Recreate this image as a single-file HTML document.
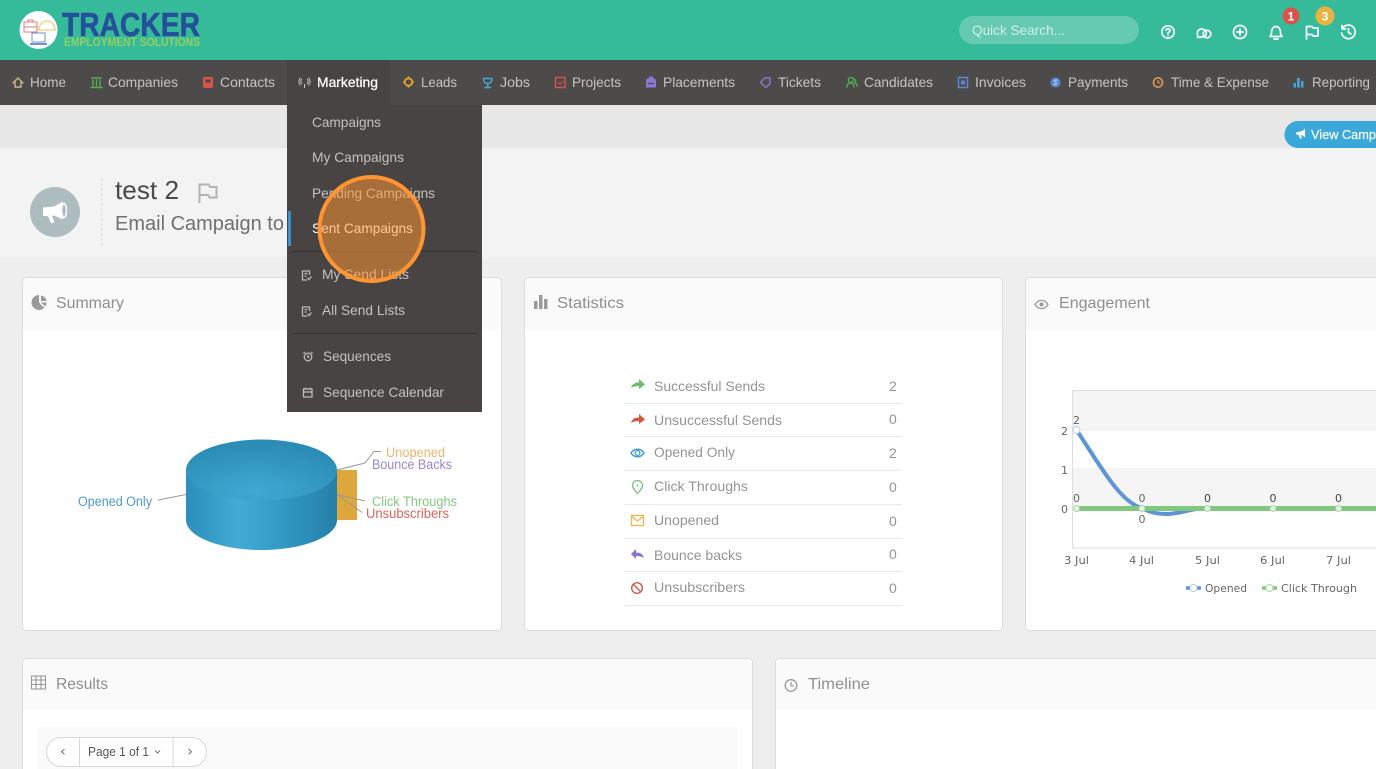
<!DOCTYPE html>
<html lang="en"><head><meta charset="utf-8"><title>test 2</title>
<style>
html,body{margin:0;padding:0;width:1376px;height:769px;overflow:hidden;background:#eee}
svg{display:block;position:absolute;left:0;top:0}
text{font-family:"Liberation Sans","DejaVu Sans",sans-serif}
.n{font-size:14px;fill:#c6c4c3}
.d{font-size:14px;fill:#c4c2c1}
.t{font-size:16px;fill:#8f8f8f}
.s{font-size:14px;fill:#949494}
.v{font-size:14px;fill:#959595}
.c{font-family:"DejaVu Sans",sans-serif;font-size:11px;fill:#666}
.i{fill:none;stroke-width:1.4;stroke-linecap:round;stroke-linejoin:round}
.h{fill:none;stroke:#fff;stroke-width:1.7;stroke-linecap:round;stroke-linejoin:round}
</style></head><body>
<svg width="1376" height="769" viewBox="0 0 1376 769" xmlns="http://www.w3.org/2000/svg">
<defs>
<linearGradient id="side" x1="0" x2="1" y1="0" y2="0"><stop offset="0" stop-color="#2b8fba"/><stop offset=".35" stop-color="#41abd6"/><stop offset=".7" stop-color="#2f95c0"/><stop offset="1" stop-color="#267fa6"/></linearGradient>
<radialGradient id="top" cx=".45" cy=".85" r=".75"><stop offset="0" stop-color="#3fa9d3"/><stop offset="1" stop-color="#2b8db6"/></radialGradient>
</defs>
<!-- backgrounds -->
<rect width="1376" height="769" fill="#eeeeee"/>
<rect width="1376" height="60" fill="#36bb9a"/>
<rect y="60" width="1376" height="45" fill="#4d4b4a"/>
<rect y="105" width="1376" height="43" fill="#e7e7e7"/>
<rect y="148" width="1376" height="110" fill="#f3f3f3"/>

<!-- logo -->
<circle cx="38.500" cy="30" r="19" fill="#fff"/>
<rect x="24" y="22" width="13" height="10" fill="none" stroke="#e27a7a" stroke-width="1"/>
<path d="M24 27H37M28 22v-2h5v2" fill="none" stroke="#e27a7a" stroke-width="1"/>
<path d="M39 30c0-12 16-12 16 0zM38 30h18" fill="none" stroke="#eec95c" stroke-width="1.100"/>
<rect x="32" y="33" width="13" height="9" fill="none" stroke="#6f93d6" stroke-width="1"/>
<path d="M30 44h17" stroke="#6f93d6" stroke-width="2"/>
<text x="62" y="36" font-size="33" font-weight="700" fill="#25509a" stroke="#25509a" stroke-width=".6" textLength="138" lengthAdjust="spacingAndGlyphs">TRACKER</text>
<text x="64" y="46" font-size="11.500" font-weight="700" fill="#93cf62" textLength="136" lengthAdjust="spacingAndGlyphs">EMPLOYMENT SOLUTIONS</text>

<!-- search -->
<rect x="959" y="16" width="180" height="28" rx="14" fill="#66c9b1"/>
<text x="972" y="35" font-size="14" fill="#d2efe7" textLength="93" lengthAdjust="spacingAndGlyphs">Quick Search...</text>

<!-- top icons -->
<circle class="h" cx="1168" cy="32" r="6.200"/><path class="h" stroke-width="1.300" d="M1166 30.200c.4-2 4-1.800 4 .2 0 1.500-2 1.500-2 2.900M1168 35.300v.2"/>
<path class="h" d="M1201 37c-2 .4-4 .6-3.500-.2 1-1.400-.2-1.500-.2-3.600 0-2.500 2-4.200 4.500-4.200s4.500 1.700 4.500 4.200-2 3.800-5.300 3.800z"/><circle class="h" cx="1207" cy="34" r="3.800"/>
<circle class="h" cx="1240" cy="32" r="6.500"/><path class="h" d="M1237 32h6M1240 29v6"/>
<path class="h" d="M1270 36.500c1.500-1 1.500-2.500 1.500-4.500 0-3 2-5.500 4.500-5.500s4.500 2.500 4.500 5.500c0 2 0 3.500 1.500 4.500zM1274 39h4"/>
<path class="h" d="M1306.500 39V26.500h5.500l1 1.500h5v8h-5l-1-1.500h-5.500"/>
<path class="h" d="M1342.500 28.500a6.800 6.800 0 1 1-.8 4.500M1342 25.500v3.500h3.500M1348.500 28.500v4l2.500 1.500"/>
<circle cx="1291" cy="16" r="8.500" fill="#d9534a"/><text x="1291" y="20.500" font-size="12" font-weight="700" fill="#fff" text-anchor="middle">1</text>
<circle cx="1325" cy="16" r="9.500" fill="#eab23e"/><text x="1325" y="20.500" font-size="12" font-weight="700" fill="#fff" text-anchor="middle">3</text>

<!-- nav -->
<rect x="287" y="60" width="103" height="45" fill="#474443"/>
<path class="i" stroke="#cbb98e" d="M13 83l5-5 5 5M15 82v5h6v-5"/>
<text class="n" x="30" y="87" textLength="36" lengthAdjust="spacingAndGlyphs">Home</text>
<path class="i" stroke="#58ad4e" d="M92 78h9M93 80v6M96.500 80v6M100 80v6M91 87.500h11"/>
<text class="n" x="108" y="87" textLength="70" lengthAdjust="spacingAndGlyphs">Companies</text>
<rect x="203" y="77" width="10" height="11" rx="1.500" fill="#d9534a"/><rect x="205.500" y="79.500" width="5" height="3" fill="#4d4b4a"/>
<text class="n" x="220" y="87" textLength="55" lengthAdjust="spacingAndGlyphs">Contacts</text>
<g fill="none" stroke="#c8c8c8" stroke-width="1"><path d="M304.500 84v4M302 79c-1.500 1.500-1.500 3.500 0 5M307 79c1.500 1.500 1.500 3.500 0 5M300.500 77.500c-2 2.500-2 5.500 0 8M308.500 77.500c2 2.500 2 5.500 0 8"/></g>
<text x="317" y="87" font-size="14" fill="#fff" stroke="#fff" stroke-width=".25" textLength="61" lengthAdjust="spacingAndGlyphs">Marketing</text>
<circle cx="408.500" cy="82" r="3.700" fill="none" stroke="#eaa42e" stroke-width="1.800"/><path d="M408.500 76.500v2M408.500 85.500v2M403 82h2M412 82h2" stroke="#eaa42e" stroke-width="1.500"/>
<text class="n" x="421" y="87" textLength="36" lengthAdjust="spacingAndGlyphs">Leads</text>
<path class="i" stroke="#4aa8d4" stroke-width="1.800" d="M483.500 78.500h8.500c0 3-1.500 5-4.250 5s-4.250-2-4.250-5zM487.750 84v3M485 87.500h5.500"/>
<text class="n" x="500" y="87" textLength="30" lengthAdjust="spacingAndGlyphs">Jobs</text>
<rect x="555.500" y="77.500" width="9.500" height="10" fill="none" stroke="#d9534a" stroke-width="1.400"/><path d="M558 82.500l2 1.800 3-3.500" fill="none" stroke="#d9534a" stroke-width="1.100"/>
<text class="n" x="572" y="87" textLength="49" lengthAdjust="spacingAndGlyphs">Projects</text>
<path d="M646 80.500c0-1 1-2 2-2h1v-2h4v2h1c1 0 2 1 2 2v7h-10z" fill="#8a78d6"/><path d="M648 83.500h6" stroke="#4d4b4a" stroke-width="1.200"/>
<text class="n" x="663" y="87" textLength="72" lengthAdjust="spacingAndGlyphs">Placements</text>
<path class="i" stroke="#8a78d6" d="M760.500 82.500l4-4.500h5.500v5.500l-4 4z"/>
<text class="n" x="778" y="87" textLength="43" lengthAdjust="spacingAndGlyphs">Tickets</text>
<path class="i" stroke="#4fae55" d="M847 87c0-3 1.500-4 3.500-4s3.500 1 3.500 4M852.500 78a2.500 2.500 0 1 1-4 2.500 2.500 2.500 0 0 1 4-2.500zM854 79a2.500 2.500 0 0 1 1 4c1 .5 2 1.500 2 3"/>
<text class="n" x="864" y="87" textLength="69" lengthAdjust="spacingAndGlyphs">Candidates</text>
<rect x="958.500" y="77.500" width="9" height="10" fill="none" stroke="#5b85d6" stroke-width="1.500"/><rect x="961" y="80.500" width="4" height="4" fill="#5b85d6"/>
<text class="n" x="975" y="87" textLength="51" lengthAdjust="spacingAndGlyphs">Invoices</text>
<circle cx="1055.500" cy="82.500" r="5" fill="#5b85d6"/><path d="M1053.500 84c1 1 3 .5 3-.8s-2-1-2-2.200 2-1.500 3-.5" fill="none" stroke="#cfdcf5" stroke-width=".9"/>
<text class="n" x="1068" y="87" textLength="60" lengthAdjust="spacingAndGlyphs">Payments</text>
<circle cx="1158" cy="82.500" r="4.600" fill="none" stroke="#e89a55" stroke-width="1.500"/><path d="M1158 80v2.700h2.500" fill="none" stroke="#e89a55" stroke-width="1.100"/>
<text class="n" x="1171" y="87" textLength="98" lengthAdjust="spacingAndGlyphs">Time &amp; Expense</text>
<path d="M1293.500 83h2.500v4.500h-2.500zM1297 78h2.800v9.500H1297zM1301 81h2.500v6.500H1301z" fill="#4aa0d0"/>
<text class="n" x="1312" y="87" textLength="58" lengthAdjust="spacingAndGlyphs">Reporting</text>

<!-- view campaign -->
<path d="M1298 121h78v27h-78a13.500 13.500 0 0 1 0-27z" fill="#3aa8d8"/>
<path d="M1296 132.500l6-1.500 3-2.500v9l-3-2.500h-1l1 3.500h-2l-1.500-3.800-2.500-.2z" fill="#fff"/>
<text x="1311" y="139" font-size="13" fill="#fff" stroke="#fff" stroke-width=".2" textLength="65" lengthAdjust="spacingAndGlyphs">View Camp</text>

<!-- title -->
<circle cx="55" cy="212" r="25" fill="#adbcbf"/>
<path d="M43 207.500l11-1 9-5v18l-9-4-2 .2 2.500 6.500-3.500 1-3-7-5-.5z" fill="#fff"/><ellipse cx="64" cy="210.500" rx="2.500" ry="7" fill="#adbcbf" stroke="#fff" stroke-width="1.500"/>
<path d="M101.500 178v70" stroke="#dcdcdc" stroke-dasharray="3 2"/>
<text x="115" y="199" font-size="26" fill="#4a4a4a" textLength="64" lengthAdjust="spacingAndGlyphs">test 2</text>
<path d="M199.500 203V184.500h9l1.500 2.500h6.500v10.500h-7l-1.500-2.500h-8.500" fill="none" stroke="#b3b3b3" stroke-width="2"/>
<text x="115" y="230" font-size="20.500" fill="#6f6f6f" textLength="169" lengthAdjust="spacingAndGlyphs">Email Campaign to</text>

<!-- cards -->
<g stroke="#dcdcdc" fill="#fff">
<rect x="22.500" y="277.500" width="479" height="353" rx="4"/>
<rect x="524.500" y="277.500" width="478" height="353" rx="4"/>
<rect x="1025.500" y="277.500" width="360" height="353" rx="4"/>
<rect x="22.500" y="658.500" width="730" height="130" rx="4"/>
<rect x="775.500" y="658.500" width="640" height="130" rx="4"/>
</g>
<g fill="#fafafa">
<path d="M23 330V282a4 4 0 0 1 4-4h470a4 4 0 0 1 4 4v48z"/>
<path d="M525 330V282a4 4 0 0 1 4-4h469a4 4 0 0 1 4 4v48z"/>
<path d="M1026 330V282a4 4 0 0 1 4-4h346v52z"/>
<path d="M23 711V663a4 4 0 0 1 4-4h721a4 4 0 0 1 4 4v48z"/>
<path d="M776 711V663a4 4 0 0 1 4-4h596v52z"/>
</g>
<path d="M39 295a7.500 7.500 0 1 0 7.500 7.500H39z" fill="#9a9a9a"/><path d="M41 295.500a7 7 0 0 1 5.500 5.500H41z" fill="#9a9a9a"/><path d="M40 303l6 5" stroke="#fafafa" stroke-width="1.500"/>
<text class="t" x="56" y="308" textLength="68" lengthAdjust="spacingAndGlyphs">Summary</text>
<path d="M534 301h3.500v8H534zM539 295h3.500v14H539zM544 299h3.500v10H544z" fill="#9a9a9a"/>
<text class="t" x="557" y="308" textLength="67" lengthAdjust="spacingAndGlyphs">Statistics</text>
<path d="M1035 304.500c3.500-5.500 9.500-5.500 13 0-3.500 5.500-9.500 5.500-13 0z" fill="none" stroke="#9a9a9a" stroke-width="1.300"/><circle cx="1041.500" cy="304.500" r="2" fill="#9a9a9a"/>
<text class="t" x="1059" y="308" textLength="91" lengthAdjust="spacingAndGlyphs">Engagement</text>
<g fill="none" stroke="#999" stroke-width="1.100"><rect x="31.500" y="676" width="14" height="13"/><path d="M31.500 680h14M31.500 684.500h14M36 676v13M41 676v13"/></g>
<text class="t" x="56" y="689" textLength="52" lengthAdjust="spacingAndGlyphs">Results</text>
<circle cx="791" cy="685.500" r="5.800" fill="none" stroke="#999" stroke-width="1.300"/><path d="M791 682v3.800h3" fill="none" stroke="#999" stroke-width="1.200"/>
<text class="t" x="808" y="689" textLength="62" lengthAdjust="spacingAndGlyphs">Timeline</text>

<!-- pie -->
<rect x="337" y="470" width="20" height="50" fill="#dda73b"/>
<path d="M186 470v50c0 16.500 34 30 75.500 30s75.500-13.500 75.500-30v-50z" fill="url(#side)"/>
<ellipse cx="261.500" cy="470" rx="75.500" ry="30.500" fill="url(#top)"/>
<g fill="none" stroke="#999" stroke-width="1">
<path d="M337 470l28-7 9-11.500h7"/>
<path d="M337 494.500l28 6.500"/>
<path d="M337 494.500l25 18"/>
<path d="M186 494.500l-28 5.500"/>
</g>
<g font-size="13.500">
<text x="386" y="457" fill="#f0b46c" textLength="59" lengthAdjust="spacingAndGlyphs">Unopened</text>
<text x="372" y="469" fill="#9a85cf" textLength="80" lengthAdjust="spacingAndGlyphs">Bounce Backs</text>
<text x="372" y="506" fill="#85c785" textLength="85" lengthAdjust="spacingAndGlyphs">Click Throughs</text>
<text x="366" y="518" fill="#d9655a" textLength="83" lengthAdjust="spacingAndGlyphs">Unsubscribers</text>
<text x="78" y="506" fill="#4b9cc4" textLength="74" lengthAdjust="spacingAndGlyphs">Opened Only</text>
</g>

<!-- statistics -->
<g stroke="#e9e9e9"><path d="M624 403.500h278M624 436.500h278M624 470.500h278M624 504.500h278M624 538.500h278M624 571.500h278M624 605.500h278"/></g>
<path d="M631 388c1-4 4-5.500 8-5.500V379l6 5.500-6 4.500v-3c-3 0-6 .5-8 2z" fill="#6cbe6a"/>
<path d="M631 423c1-4 4-5.500 8-5.500V414l6 5.500-6 4.500v-3c-3 0-6 .5-8 2z" fill="#d2573f"/>
<path d="M631 453c3-5 10-5 13 0-3 5-10 5-13 0z" fill="none" stroke="#3c9ec9" stroke-width="1.400"/><circle cx="637.500" cy="453" r="2.400" fill="none" stroke="#3c9ec9" stroke-width="1.300"/>
<path d="M637.500 493.500c-3-3.500-5-5.500-5-8a5 5 0 0 1 10 0c0 2.500-2 4.500-5 8z" fill="none" stroke="#7fc07f" stroke-width="1.300"/><circle cx="637.500" cy="485.500" r="1" fill="#7fc07f"/>
<rect x="631.500" y="515.500" width="12" height="10" fill="none" stroke="#eeb558" stroke-width="1.400"/><path d="M631.500 516l6 5 6-5" fill="none" stroke="#eeb558" stroke-width="1.400"/>
<path d="M644 558c-1-4-4-5.500-8-5.500V549l-5 5 5 5v-3c3 0 6 .5 8 2z" fill="#8b76cf"/>
<circle cx="637" cy="588" r="5.300" fill="none" stroke="#cc5a50" stroke-width="1.400"/><path d="M633.300 584.300l7.400 7.400" stroke="#cc5a50" stroke-width="1.400"/>
<text class="s" x="654" y="391" textLength="111" lengthAdjust="spacingAndGlyphs">Successful Sends</text>
<text class="s" x="654" y="425" textLength="128" lengthAdjust="spacingAndGlyphs">Unsuccessful Sends</text>
<text class="s" x="654" y="457" textLength="81" lengthAdjust="spacingAndGlyphs">Opened Only</text>
<text class="s" x="654" y="491" textLength="94" lengthAdjust="spacingAndGlyphs">Click Throughs</text>
<text class="s" x="654" y="525" textLength="65" lengthAdjust="spacingAndGlyphs">Unopened</text>
<text class="s" x="654" y="560" textLength="88" lengthAdjust="spacingAndGlyphs">Bounce backs</text>
<text class="s" x="654" y="592" textLength="91" lengthAdjust="spacingAndGlyphs">Unsubscribers</text>
<text class="v" x="889" y="391">2</text><text class="v" x="889" y="424">0</text><text class="v" x="889" y="458">2</text><text class="v" x="889" y="492">0</text><text class="v" x="889" y="526">0</text><text class="v" x="889" y="559">0</text><text class="v" x="889" y="593">0</text>

<!-- chart -->
<rect x="1072.500" y="390.500" width="304" height="158" fill="#fff"/>
<rect x="1073" y="391" width="303" height="39" fill="#f5f5f5"/>
<rect x="1073" y="469" width="303" height="39" fill="#f5f5f5"/>
<path d="M1072.500 390.500H1376M1072.500 390.500V548M1072.500 548H1376" fill="none" stroke="#dedede"/>
<path d="M1073 430h303M1073 469h303" stroke="#eee"/>
<path d="M1076.500 430C1098 462 1120 503 1142 508c8 5 16 6 24 6 14 0 27-6 41.500-6" fill="none" stroke="#5d95d6" stroke-width="4"/>
<circle cx="1076.500" cy="430" r="3.500" fill="#fff" stroke="#b5cdea"/>
<path d="M1076 508.500H1376" stroke="#81c77f" stroke-width="5"/>
<g fill="#e8f5e6" stroke="#a9daa8"><circle cx="1076.500" cy="508.500" r="3"/><circle cx="1142" cy="508.500" r="3"/><circle cx="1207.500" cy="508.500" r="3"/><circle cx="1273" cy="508.500" r="3"/><circle cx="1338.500" cy="508.500" r="3"/></g>
<text class="c" x="1061" y="435">2</text><text class="c" x="1061" y="474">1</text><text class="c" x="1061" y="513">0</text>
<text class="c" x="1073" y="424">2</text>
<text class="c" x="1073" y="502">0</text><text class="c" x="1138.500" y="502">0</text><text class="c" x="1138.500" y="523">0</text><text class="c" x="1204" y="502" style="fill:#444">0</text><text class="c" x="1269.500" y="502" style="fill:#444">0</text><text class="c" x="1335" y="502" style="fill:#444">0</text>
<text class="c" x="1064" y="564" textLength="25" lengthAdjust="spacingAndGlyphs">3 Jul</text><text class="c" x="1129" y="564" textLength="25" lengthAdjust="spacingAndGlyphs">4 Jul</text><text class="c" x="1195" y="564" textLength="25" lengthAdjust="spacingAndGlyphs">5 Jul</text><text class="c" x="1260" y="564" textLength="25" lengthAdjust="spacingAndGlyphs">6 Jul</text><text class="c" x="1326" y="564" textLength="25" lengthAdjust="spacingAndGlyphs">7 Jul</text>
<text class="c" x="1205" y="592" textLength="42" lengthAdjust="spacingAndGlyphs">Opened</text><text class="c" x="1281" y="592" textLength="76" lengthAdjust="spacingAndGlyphs">Click Through</text>
<path d="M1186 588h15" stroke="#5d95d6" stroke-width="3.500"/><circle cx="1193.500" cy="588" r="3.500" fill="#fff" stroke="#b5cdea"/>
<path d="M1262 588h15" stroke="#81c77f" stroke-width="3.500"/><circle cx="1269.500" cy="588" r="3.500" fill="#fff" stroke="#a9daa8"/>

<!-- pager -->
<rect x="38" y="727" width="699" height="42" fill="#fafafa"/>
<rect x="46.500" y="737.500" width="160" height="29" rx="14.500" fill="#fff" stroke="#d8d8d8"/>
<path d="M79.500 737.500v29M173 737.500v29" stroke="#d8d8d8"/>
<path d="M64.500 749l-3 2.700 3 2.700M188.500 749l3 2.700-3 2.700M155 750.500l2.500 2.500 2.500-2.500" fill="none" stroke="#777" stroke-width="1.100"/>
<text x="88" y="756" font-size="13" fill="#555" textLength="61" lengthAdjust="spacingAndGlyphs">Page 1 of 1</text>

<!-- dropdown -->
<rect x="287" y="105" width="195" height="307" fill="#474443"/>
<text class="d" x="312" y="127" textLength="69" lengthAdjust="spacingAndGlyphs">Campaigns</text>
<text class="d" x="312" y="162" textLength="92" lengthAdjust="spacingAndGlyphs">My Campaigns</text>
<text class="d" x="312" y="198" textLength="123" lengthAdjust="spacingAndGlyphs">Pending Campaigns</text>
<text x="312" y="233" font-size="14" fill="#fff" textLength="101" lengthAdjust="spacingAndGlyphs">Sent Campaigns</text>
<rect x="288" y="211" width="3" height="35" fill="#3d8fc9"/>
<path d="M292 251.500h185M292 333.500h185" stroke="#373534"/>
<g fill="none" stroke="#bdbbba" stroke-width="1.300">
<path d="M307 280h-4.500v-9h7v4M304.500 273.500h3M304.500 276h2M307.500 278l1.500 1.500 2.500-3"/>
<path d="M307 316h-4.500v-9h7v4M304.500 309.500h3M304.500 312h2M307.500 314l1.500 1.500 2.500-3"/>
<circle cx="308" cy="357" r="3.800"/><path d="M308 355v2.200h1.500M303.500 353.500l1.500-1.500M312.500 353.500l-1.500-1.500"/>
<rect x="303.500" y="389" width="8.500" height="8"/><path d="M303.500 392h8.500M305.500 387.500v2M310 387.500v2"/>
</g>
<text class="d" x="322" y="279" textLength="87" lengthAdjust="spacingAndGlyphs">My Send Lists</text>
<text class="d" x="322" y="315" textLength="83" lengthAdjust="spacingAndGlyphs">All Send Lists</text>
<text class="d" x="323" y="361" textLength="68" lengthAdjust="spacingAndGlyphs">Sequences</text>
<text class="d" x="323" y="397" textLength="121" lengthAdjust="spacingAndGlyphs">Sequence Calendar</text>

<!-- highlight -->
<circle cx="371.500" cy="229" r="52" fill="#ff9433" fill-opacity=".53" stroke="#ff9433" stroke-width="4"/>
</svg>
</body></html>
